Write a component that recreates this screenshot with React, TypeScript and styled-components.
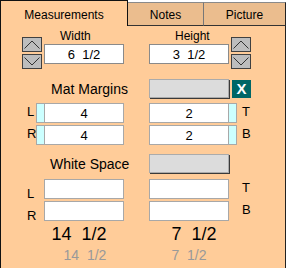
import React, { FC } from "react";
import styled, { createGlobalStyle } from "styled-components";

const PEACH = "#FFCC99";
const TAN = "#EBBD8E";

const GlobalStyle = createGlobalStyle`
    body {
        margin: 0;
        background: #fff;
        font-family: "Liberation Sans", Arial, sans-serif;
        color: #000;
    }
`

const Panel = styled.div`
    width: 286px;
`

const TabBar = styled.div`
    display: flex;
    height: 26px;
`

const Tab = styled.div<{ $active?: boolean; $width: number; $last?: boolean }>`
    box-sizing: border-box;
    width: ${p => p.$width}px;
    font-size: 12px;
    line-height: 14px;
    text-align: center;
    white-space: nowrap;
    ${p => p.$active ? `
        height: 26px;
        padding-top: 7px;
        background: ${PEACH};
        border: 1px solid #111;
        border-bottom: none;
    ` : `
        height: 24px;
        margin-top: 2px;
        padding-top: 5px;
        background: ${TAN};
        border-top: 1px solid #8a8a8a;
        border-bottom: 1px solid #333;
        border-right: 1px solid ${p.$last ? "#222" : "#777"};
    `}
`

const Body = styled.div`
    box-sizing: border-box;
    height: 242px;
    background: ${PEACH};
    border-left: 1px solid #111;
    border-right: 1px solid #222;
`

const Grid = styled.div<{ $rows: string; $mt?: number }>`
    display: grid;
    grid-template-columns: 35px 8px 80px 25px 80px 8px 1fr;
    grid-template-rows: ${p => p.$rows};
    row-gap: 2px;
    margin-top: ${p => p.$mt ?? 0}px;
`

const FieldLabel = styled.div<{ $col: number; $pad: number }>`
    grid-column: ${p => p.$col};
    grid-row: 1;
    padding: 3px 0 0 ${p => p.$pad}px;
    font-size: 12px;
    line-height: 14px;
    white-space: nowrap;
`

const Field = styled.input<{ $col: number; $row?: number; $dark?: boolean }>`
    grid-column: ${p => p.$col};
    grid-row: ${p => p.$row ?? "auto"};
    box-sizing: border-box;
    width: 80px;
    height: 20px;
    margin: 0;
    padding: 0;
    border: 1px solid ${p => p.$dark ? "#8a8a8a" : "#a8a8a8"};
    border-radius: 0;
    background: #fff;
    font-family: "Liberation Sans", Arial, sans-serif;
    font-size: 13px;
    color: #000;
    text-align: center;
    white-space: pre;
    outline: none;
`

const SpinStack = styled.div<{ $col: string; $left: number }>`
    grid-column: ${p => p.$col};
    grid-row: 1 / span 2;
    align-self: start;
    display: flex;
    flex-direction: column;
    gap: 2px;
    margin: 11px 0 0 ${p => p.$left}px;
`

const SpinButton = styled.div`
    box-sizing: border-box;
    width: 20px;
    height: 15px;
    background: #bdbdbd;
    border: 1px solid #404040;
    & svg {
        display: block;
    }
`

const SectionTitle = styled.div<{ $pad: number }>`
    grid-column: 1 / span 4;
    padding: 2px 0 0 ${p => p.$pad}px;
    font-size: 14px;
    line-height: 16px;
    white-space: nowrap;
`

const GrayButton = styled.div`
    grid-column: 5;
    box-sizing: border-box;
    width: 80px;
    height: 19px;
    background: #dcdcdc;
    border: 1px solid #ababab;
    box-shadow: 1px 1px 0 #3a3a3a;
`

const ClearButton = styled.div`
    grid-column: 6 / span 2;
    width: 19px;
    height: 18px;
    margin: 1px 0 0 3px;
    background: #006666;
    color: #fff;
    font-size: 15px;
    font-weight: bold;
    line-height: 18px;
    text-align: center;
`

const SideLabel = styled.div<{ $col: number; $left: number; $low?: boolean }>`
    grid-column: ${p => p.$col};
    padding: ${p => p.$low ? 6 : 0}px 0 0 ${p => p.$left}px;
    font-size: 13px;
    line-height: 18px;
`

const Strip = styled.div<{ $side: "left" | "right" }>`
    grid-column: ${p => p.$side === "left" ? 2 : 6};
    box-sizing: border-box;
    height: 20px;
    background: #ccffff;
    border: 1px solid #a8a8a8;
    border-${p => p.$side === "left" ? "right" : "left"}: none;
`

const Total = styled.div<{ $col: number; $shift: number; $muted?: boolean }>`
    grid-column: ${p => p.$col};
    padding: ${p => p.$shift < 0 ? `0 ${-p.$shift * 2}px 0 0` : `0 0 0 ${p.$shift * 2}px`};
    text-align: center;
    white-space: pre;
    font-size: ${p => p.$muted ? 14 : 18}px;
    line-height: ${p => p.$muted ? 16 : 20}px;
    color: ${p => p.$muted ? "#999" : "#000"};
`

const Chevron: FC<{ dir: "up" | "down" }> = ({ dir }) => (
    <svg width="18" height="13" viewBox="0 0 18 13">
        <polyline
            points={dir === "up" ? "1.5,10.5 9,3 16.5,10.5" : "1.5,2.5 9,10 16.5,2.5"}
            fill="none"
            stroke="#333"
            strokeWidth="1"
        />
    </svg>
)

const Spinner: FC<{ col: string; left: number }> = ({ col, left }) => (
    <SpinStack $col={col} $left={left}>
        <SpinButton><Chevron dir="up" /></SpinButton>
        <SpinButton><Chevron dir="down" /></SpinButton>
    </SpinStack>
)

interface MarginRowModel {
    left: string,
    right: string,
    leftValue?: string,
    rightValue?: string,
    withStrips?: boolean,
    lowLeft?: boolean,
}

const MarginRow: FC<MarginRowModel> = ({ left, right, leftValue = "", rightValue = "", withStrips, lowLeft }) => (
    <>
        <SideLabel $col={1} $left={26} $low={lowLeft}>{left}</SideLabel>
        {withStrips && <Strip $side="left" />}
        <Field $col={3} defaultValue={leftValue} readOnly />
        <Field $col={5} defaultValue={rightValue} readOnly />
        {withStrips && <Strip $side="right" />}
        <SideLabel $col={7} $left={5}>{right}</SideLabel>
    </>
)

const App: FC = () => {
    return <Panel>
        <GlobalStyle />
        <TabBar>
            <Tab $active $width={128}>Measurements</Tab>
            <Tab $width={76}>Notes</Tab>
            <Tab $width={82} $last>Picture</Tab>
        </TabBar>
        <Body>
            <Grid $rows="16px 20px">
                <Spinner col="1 / span 2" left={21} />
                <FieldLabel $col={3} $pad={16}>Width</FieldLabel>
                <Field $col={3} $row={2} $dark defaultValue="6  1/2" readOnly />
                <FieldLabel $col={5} $pad={26}>Height</FieldLabel>
                <Field $col={5} $row={2} $dark defaultValue="3  1/2" readOnly />
                <Spinner col="6 / span 2" left={2} />
            </Grid>

            <Grid $rows="20px" $mt={15}>
                <SectionTitle $pad={50}>Mat Margins</SectionTitle>
                <GrayButton />
                <ClearButton>X</ClearButton>
            </Grid>
            <Grid $rows="20px 20px" $mt={4}>
                <MarginRow left="L" right="T" leftValue="4" rightValue="2" withStrips />
                <MarginRow left="R" right="B" leftValue="4" rightValue="2" withStrips />
            </Grid>

            <Grid $rows="20px" $mt={9}>
                <SectionTitle $pad={49}>White Space</SectionTitle>
                <GrayButton />
            </Grid>
            <Grid $rows="20px 20px" $mt={5}>
                <MarginRow left="L" right="T" lowLeft />
                <MarginRow left="R" right="B" lowLeft />
            </Grid>

            <Grid $rows="20px" $mt={3}>
                <Total $col={3} $shift={-5}>14  1/2</Total>
                <Total $col={5} $shift={5}>7  1/2</Total>
            </Grid>
            <Grid $rows="16px" $mt={3}>
                <Total $col={3} $shift={1} $muted>14  1/2</Total>
                <Total $col={5} $shift={0} $muted>7  1/2</Total>
            </Grid>
        </Body>
    </Panel>
}

export default App;
